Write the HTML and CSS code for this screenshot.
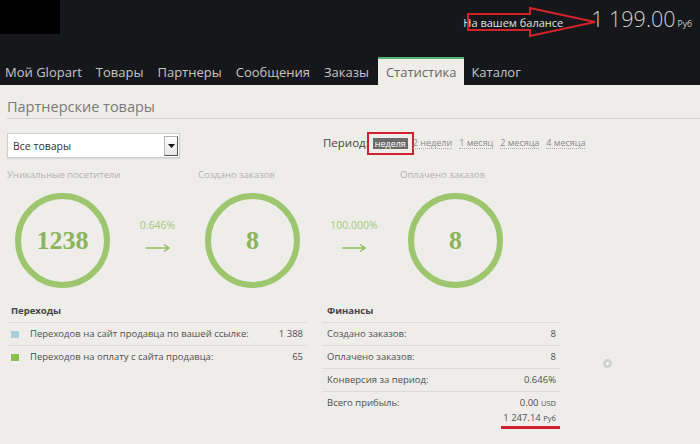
FILE: index.html
```html
<!DOCTYPE html>
<html lang="ru">
<head>
<meta charset="utf-8">
<title>Партнерские товары</title>
<link rel="stylesheet" href="styles.css">
</head>
<body>
<header class="hdr">
  <div class="top">
    <div class="logo"></div>
    <div class="balance">
      <span class="bal-label">На вашем балансе</span>
      <span class="bal-sum">1 199.00</span>
      <span class="bal-cur">Руб</span>
    </div>
    <svg class="annot" viewBox="0 0 700 57" aria-hidden="true">
      <path d="M468 14 H530 V8 L595 22 L530 36 V30 H468 Z" fill="none" stroke="#d2222c" stroke-width="2" stroke-linejoin="miter"/>
    </svg>
  </div>
  <nav class="nav">
    <a class="nav-item">Мой Glopart</a>
    <a class="nav-item">Товары</a>
    <a class="nav-item">Партнеры</a>
    <a class="nav-item">Сообщения</a>
    <a class="nav-item">Заказы</a>
    <a class="nav-item active">Статистика</a>
    <a class="nav-item">Каталог</a>
  </nav>
</header>
<main class="content">
  <h1 class="title">Партнерские товары</h1>
  <div class="controls">
    <div class="select">
      <span>Все товары</span>
      <span class="sel-btn"><svg width="7" height="4" viewBox="0 0 7 4"><path d="M0 0 H7 L3.5 4 Z" fill="#111"/></svg></span>
    </div>
    <div class="period">
      <span class="period-label">Период:</span>
      <span class="tag">неделя</span>
      <a class="plink first">2 недели</a>
      <a class="plink">1 месяц</a>
      <a class="plink">2 месяца</a>
      <a class="plink">4 месяца</a>
    </div>
  </div>
  <div class="funnel">
    <div class="stage">
      <div class="stage-label l1">Уникальные посетители</div>
      <div class="ring">1238</div>
    </div>
    <div class="conv conv1">
      <div class="pct">0.646%</div>
      <svg class="arrow" viewBox="0 0 24 10"><path d="M0 5 H23 M18 1.5 L23 5 L18 8.5" fill="none" stroke="#8fbd5e" stroke-width="1.4"/></svg>
    </div>
    <div class="stage">
      <div class="stage-label l2">Создано заказов</div>
      <div class="ring">8</div>
    </div>
    <div class="conv conv2">
      <div class="pct">100.000%</div>
      <svg class="arrow" viewBox="0 0 24 10"><path d="M0 5 H23 M18 1.5 L23 5 L18 8.5" fill="none" stroke="#8fbd5e" stroke-width="1.4"/></svg>
    </div>
    <div class="stage">
      <div class="stage-label l3">Оплачено заказов</div>
      <div class="ring">8</div>
    </div>
  </div>
  <div class="tables">
    <section class="tbl tbl-left">
      <div class="tbl-head">Переходы</div>
      <div class="row"><span class="sq sq-blue"></span><span class="lbl">Переходов на сайт продавца по вашей ссылке:</span><span class="val">1 388</span></div>
      <div class="row"><span class="sq sq-green"></span><span class="lbl">Переходов на оплату с сайта продавца:</span><span class="val">65</span></div>
    </section>
    <section class="tbl tbl-right">
      <div class="tbl-head">Финансы</div>
      <div class="row"><span class="lbl">Создано заказов:</span><span class="val">8</span></div>
      <div class="row"><span class="lbl">Оплачено заказов:</span><span class="val">8</span></div>
      <div class="row"><span class="lbl">Конверсия за период:</span><span class="val">0.646%</span></div>
      <div class="row"><span class="lbl">Всего прибыль:</span>
        <span class="vals"><span class="v1">0.00 <small>USD</small></span><span class="v2">1 247.14 <small>Руб</small></span></span>
      </div>
    </section>
    <div class="dot"></div>
  </div>
</main>
</body>
</html>
```

FILE: styles.css
```css
body {
  margin: 0;
  background: #eeede9;
  font-family: "Open Sans", "DejaVu Sans", sans-serif;
}

.hdr {
  background: #16171b;
  position: relative;
}

.top {
  height: 57px;
  display: flex;
  justify-content: space-between;
  align-items: flex-start;
}

.logo {
  width: 60px;
  height: 34px;
  background: #000;
}

.balance {
  display: flex;
  align-items: baseline;
  padding: 7px 8px 0 0;
  line-height: 24px;
  color: #d0d0d0;
}

.bal-label {
  font-size: 11px;
  margin-right: 28px;
  color: #e2e2e2;
}

.bal-sum {
  font-size: 21.5px;
  font-weight: 300;
  color: #cfcfcf;
}

.bal-cur {
  font-size: 8.5px;
  margin-left: 2px;
}

.annot {
  position: absolute;
  left: 0;
  top: 0;
  width: 700px;
  height: 57px;
  pointer-events: none;
}

.nav {
  display: flex;
  height: 28px;
}

.nav-item {
  font-size: 13px;
  color: #c6c6c6;
  padding: 0 7px;
  line-height: 26px;
  border-top: 2px solid transparent;
  text-decoration: none;
}

.nav-item:first-child {
  padding-left: 5px;
}

.nav-item.active {
  background: #eeede9;
  color: #666;
  border-top-color: #54b477;
  padding: 0 8px;
  margin-left: 2px;
}

.content {
  padding: 11px 0 0 7px;
}

.title {
  margin: 0;
  font-size: 14.5px;
  font-weight: 400;
  color: #7a7a7a;
  line-height: 22px;
  border-bottom: 1px solid #d4d4cf;
}

.controls {
  display: flex;
  align-items: flex-start;
  margin-top: 14px;
}

.select {
  width: 173px;
  height: 25px;
  box-sizing: border-box;
  background: #fff;
  border: 1px solid #d0d0d0;
  display: flex;
  align-items: center;
  justify-content: space-between;
  font-size: 10.5px;
  color: #333;
  padding-left: 5px;
  box-shadow: 0 1px 1px rgba(0, 0, 0, 0.08);
}

.sel-btn {
  width: 14px;
  height: 20px;
  margin-right: 1px;
  box-sizing: border-box;
  border: 1px solid #b5b5b5;
  border-right-color: #555;
  border-bottom-color: #555;
  background: linear-gradient(#fdfdfd, #e6e6e6);
  display: flex;
  align-items: center;
  justify-content: center;
}

.period {
  margin-left: 143px;
  margin-top: 1px;
  display: flex;
  align-items: center;
  line-height: 18px;
}

.period-label {
  font-size: 11.5px;
  color: #444;
}

.tag {
  margin-left: 4px;
  margin-right: -2px;
  background: #6b6b6b;
  color: #fff;
  font-size: 9px;
  line-height: 11px;
  padding: 0 2px;
  outline: 2px solid #cf2230;
  outline-offset: 4px;
}

.plink {
  margin-left: 7px;
  font-size: 9px;
  color: #8a8a8a;
  line-height: 11px;
  border-bottom: 1px dotted #aaa;
}

.funnel {
  display: flex;
  padding-left: 8px;
  margin-top: 10px;
}

.stage {
  width: 95px;
  display: flex;
  flex-direction: column;
}

.stage-label {
  font-size: 9.5px;
  color: #b3b3ad;
  line-height: 14px;
  white-space: nowrap;
  margin-left: -8px;
}

.stage-label.l2 {
  margin-left: -7px;
}

.ring {
  margin-top: 11px;
  width: 95px;
  height: 95px;
  box-sizing: border-box;
  border: 6px solid #9dc66f;
  border-radius: 50%;
  display: flex;
  align-items: center;
  justify-content: center;
  font-family: "Liberation Serif", serif;
  font-weight: 700;
  font-size: 26px;
  color: #8ab55a;
}

.conv {
  display: flex;
  flex-direction: column;
  align-items: center;
  padding-top: 50px;
}

.conv1 {
  width: 95px;
}

.conv2 {
  width: 108px;
}

.pct {
  font-size: 10.5px;
  color: #a3c97a;
  line-height: 14px;
}

.arrow {
  margin-top: 11px;
  width: 24px;
  height: 10px;
}

.tables {
  display: grid;
  grid-template-columns: 299px 238px auto;
  column-gap: 15px;
  margin: 12px 0 0 1px;
  align-items: start;
}

.tbl-head {
  font-size: 9.5px;
  font-weight: 700;
  color: #444;
  line-height: 22px;
  border-bottom: 1px solid #dcdcd6;
  padding-left: 3px;
}

.row {
  display: flex;
  align-items: flex-start;
  font-size: 9.5px;
  color: #4f4f4f;
  line-height: 22px;
  border-bottom: 1px solid #dcdcd6;
  padding: 0 4px 0 3px;
}

.row:last-child {
  border-bottom: none;
}

.lbl {
  flex: 1;
}

.tbl-right .tbl-head,
.tbl-right .row {
  padding-left: 5px;
}

.sq {
  width: 8px;
  height: 7px;
  margin: 8px 11px 0 0;
}

.sq-blue {
  background: #a9cfdb;
}

.sq-green {
  background: #8bbf4e;
}

.vals {
  display: flex;
  flex-direction: column;
  align-items: flex-end;
}

.vals small {
  font-size: 7.5px;
}

.v2 {
  line-height: 15px;
  margin-top: -4px;
  margin-right: -4px;
  padding: 0 4px 0 2px;
  border-bottom: 3px solid #d01f2e;
}

.dot {
  margin: 59px 0 0 28px;
  width: 9px;
  height: 9px;
  box-sizing: border-box;
  border: 3px solid #d2d2ce;
  border-radius: 50%;
  background: #fafafa;
}
```
